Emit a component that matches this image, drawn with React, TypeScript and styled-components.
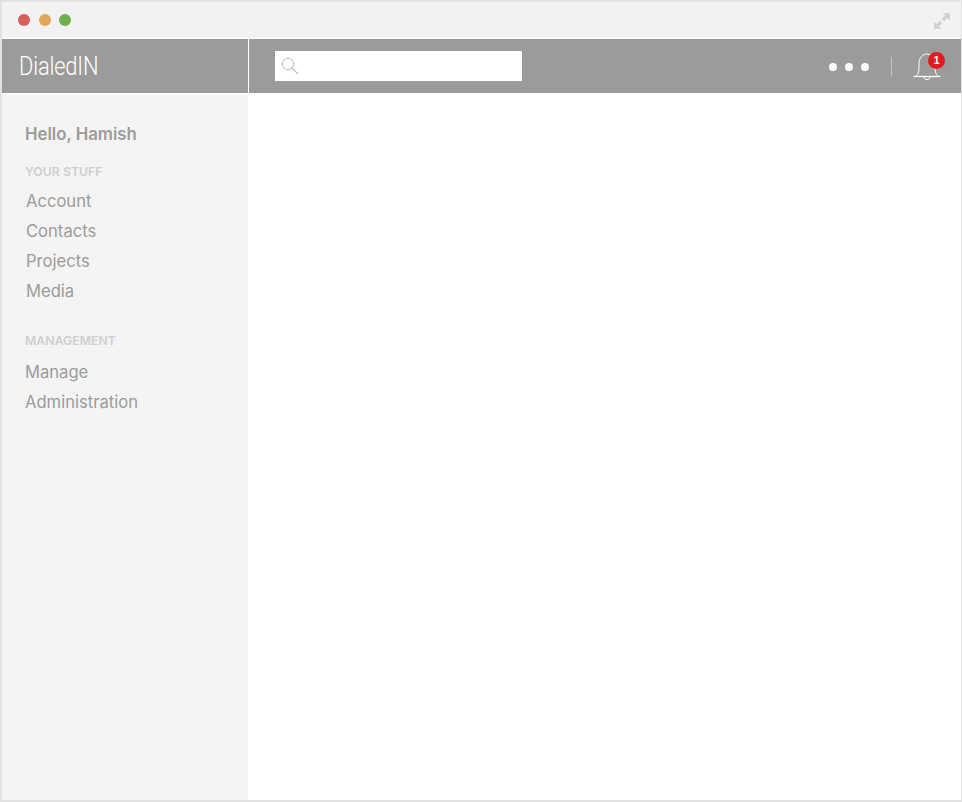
import styled, { createGlobalStyle } from "styled-components";

const GlobalStyle = createGlobalStyle`
  html, body {
    margin: 0;
    padding: 0;
    background: #fff;
  }
  * {
    box-sizing: border-box;
  }
`;

const sections = [
  { title: "YOUR STUFF", titleGap: 6, indent: 1, items: ["Account", "Contacts", "Projects", "Media"] },
  { title: "MANAGEMENT", titleGap: 8, indent: 0, items: ["Manage", "Administration"] },
];

export default function App() {
  return (
    <>
      <GlobalStyle />
      <Frame>
        <TitleBar>
          <Lights>
            <Light $color="#d9605a" />
            <Light $color="#e0a757" />
            <Light $color="#70b04e" />
          </Lights>
          <ExpandIcon width="16" height="16" viewBox="0 0 16 16" fill="#d2d2d2">
            <path d="M8.500 0H16v7.500l-2.500-2.500-3.300 3.300-2.500-2.500 3.300-3.300z" />
            <path d="M7.500 16H0V8.500l2.500 2.500 3.300-3.300 2.500 2.500-3.300 3.300z" />
          </ExpandIcon>
        </TitleBar>

        <Header>
          <Brand>
            <BrandName>DialedIN</BrandName>
          </Brand>
          <TopBar>
            <SearchBox>
              <svg width="20" height="20" viewBox="0 0 20 20" fill="none" stroke="#bdbdbd">
                <circle cx="8" cy="8" r="5.600" strokeWidth="1" />
                <path d="M12 12l6 6" strokeWidth="1.300" />
              </svg>
            </SearchBox>
            <TopActions>
              <Dots>
                <Dot />
                <Dot />
                <Dot />
              </Dots>
              <Divider />
              <BellWrap>
                <svg width="28" height="28" viewBox="0 0 28 28" fill="none" stroke="#fff" strokeWidth="1">
                  <path d="M3 24c2-1.500 3-4 3-8v-5c0-5 3.500-9 8-9s8 4 8 9v5c0 4 1 6.500 3 8" />
                  <path d="M.5 24.500h27" strokeWidth="1.300" />
                  <path d="M11 25c0 2 1.300 2.500 3 2.500s3-.5 3-2.500" />
                </svg>
                <Badge>1</Badge>
              </BellWrap>
            </TopActions>
          </TopBar>
        </Header>

        <Body>
          <Sidebar>
            <Greeting>Hello, Hamish</Greeting>
            {sections.map((section) => (
              <Section key={section.title}>
                <SectionTitle $gap={section.titleGap}>{section.title}</SectionTitle>
                {section.items.map((item) => (
                  <NavItem key={item} $indent={section.indent}>
                    {item}
                  </NavItem>
                ))}
              </Section>
            ))}
          </Sidebar>
          <Content />
        </Body>
      </Frame>
    </>
  );
}

const Frame = styled.div`
  width: 962px;
  height: 802px;
  border: 2px solid #e2e2e2;
  border-right-width: 1px;
  display: flex;
  flex-direction: column;
  background: #fff;
  font-family: "Inter", "Liberation Sans", sans-serif;
`;

const TitleBar = styled.div`
  height: 36px;
  flex: none;
  background: #f2f2f2;
  display: flex;
  align-items: center;
  justify-content: space-between;
  padding: 0 11px 0 16px;
`;

const ExpandIcon = styled.svg`
  margin-top: 1px;
`;

const Lights = styled.div`
  display: flex;
  gap: 8.500px;
`;

const Light = styled.span<{ $color: string }>`
  width: 12px;
  height: 12px;
  border-radius: 50%;
  background: ${(p) => p.$color};
`;

const Header = styled.div`
  height: 54px;
  flex: none;
  margin: 1px 0;
  display: flex;
  background: #9b9b9b;
`;

const Brand = styled.div`
  width: 247px;
  flex: none;
  border-right: 1px solid #fff;
  padding-left: 17px;
  display: flex;
  align-items: center;
  color: #fff;
`;

const BrandName = styled.span`
  display: inline-block;
  transform: scaleX(0.84);
  transform-origin: left center;
  font-family: "Roboto", "Liberation Sans", sans-serif;
  font-size: 26px;
  font-weight: 300;
  letter-spacing: -0.2px;
`;

const TopBar = styled.div`
  flex: 1;
  display: flex;
  align-items: center;
  justify-content: space-between;
  padding: 0 20px 0 26px;
`;

const SearchBox = styled.div`
  width: 247px;
  height: 30px;
  background: #fff;
  display: flex;
  align-items: center;
  padding-left: 5px;
`;

const TopActions = styled.div`
  display: flex;
  align-items: center;
`;

const Dots = styled.div`
  display: flex;
  gap: 8px;
  margin-top: 1px;
`;

const Dot = styled.span`
  width: 8px;
  height: 8px;
  border-radius: 50%;
  background: #fff;
`;

const Divider = styled.span`
  width: 1px;
  height: 19px;
  margin: 0 21px 0 22px;
  background: #c4c4c4;
`;

const BellWrap = styled.div`
  position: relative;
  width: 28px;
  height: 28px;
`;

const Badge = styled.span`
  position: absolute;
  top: 0;
  right: -4px;
  width: 17px;
  height: 17px;
  border-radius: 50%;
  background: #e3191f;
  color: #fff;
  font-family: "Liberation Sans", sans-serif;
  font-size: 11px;
  font-weight: 700;
  line-height: 17px;
  text-align: center;
`;

const Body = styled.div`
  flex: 1;
  display: flex;
  min-height: 0;
`;

const Sidebar = styled.nav`
  width: 246px;
  flex: none;
  background: #f4f4f4;
  padding: 28px 0 0 23px;
`;

const Greeting = styled.div`
  font-size: 16.800px;
  font-weight: 600;
  line-height: 24px;
  color: #9b9b9b;
`;

const Section = styled.div`
  margin-bottom: 27px;
`;

const SectionTitle = styled.div<{ $gap: number }>`
  margin-top: 18px;
  margin-bottom: ${(p) => p.$gap}px;
  font-size: 12.300px;
  font-weight: 600;
  line-height: 16px;
  color: #cfcfcf;
`;

const NavItem = styled.div<{ $indent: number }>`
  height: 30px;
  padding-left: ${(p) => p.$indent}px;
  line-height: 30px;
  font-size: 16.600px;
  color: #9b9b9b;
`;

const Content = styled.main`
  flex: 1;
  background: #fff;
`;
